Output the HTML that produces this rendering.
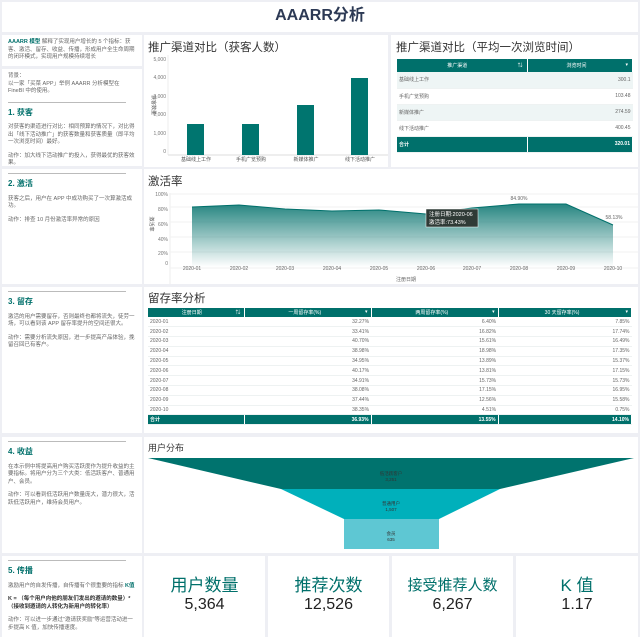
<!DOCTYPE html>
<html><head><meta charset="utf-8"><style>
*{margin:0;padding:0;box-sizing:border-box}
body{width:640px;height:637px;background:#eeeff4;position:relative;overflow:hidden;font-family:"Liberation Sans","Noto Sans CJK SC",sans-serif;color:#555}
.c{position:absolute;background:#fff}
.t{position:absolute;font-size:11.5px;color:#333}
.lt{font-size:5.5px;line-height:7.5px;color:#666;padding:0 6px}
.lt p{margin-bottom:6px}
.h{color:#00706b;font-weight:bold;font-size:8px;margin:6px 0 8px}
.hr{border-top:1px solid #bbb;margin:0 10px 0 6px}
.a{position:absolute;font-size:5px;color:#777}
table{border-collapse:collapse;width:100%;font-size:5px;color:#666}
th{background:#00706b;color:#fff;font-weight:normal;border-right:1px solid #fff}
td{border-bottom:1px solid #eef2f2;text-align:right;padding:0 2px}
td:first-child{text-align:left}
.tot td{background:#00706b;color:#fff;font-weight:bold;border-right:1px solid #fff}
.k{position:absolute;top:556px;height:81px;width:121px;background:#fff;text-align:center}
.k .l{color:#00706b;font-size:17px;margin-top:20px;line-height:20px}
.k .n{color:#222;font-size:16px;line-height:18px}
</style></head><body>
<div class="c" style="left:2px;top:2px;width:636px;height:30px;text-align:center;font-size:16px;font-weight:bold;color:#2d3a55;line-height:28px">AAARR分析</div>

<div class="c lt" style="left:2px;top:35px;width:140px;height:31px;padding-top:4px"><b style="color:#00706b">AAARR 模型</b> 解释了实现用户增长的 5 个指标：获客、激活、留存、收益、传播，形成用户全生命周期的闭环模式，实现用户规模持续增长</div>
<div class="c lt" style="left:2px;top:69px;width:140px;height:97px;padding-top:4px"><p>背景：<br>以一家「买菜 APP」举例 AAARR 分析模型在 FineBI 中的使用。</p><div class="hr" style="margin-left:0"></div><div class="h">1. 获客</div><p>对获客的渠道进行对比：相同预算的情况下，对比得出「线下活动推广」的获客数量和获客质量（即平均一次浏览时间）最好。</p><p>动作：加大线下活动推广的投入，获得最优的获客效果。</p></div>
<div class="c lt" style="left:2px;top:169px;width:140px;height:115px;padding-top:4px"><div class="hr" style="margin-left:0"></div><div class="h">2. 激活</div><p>获客之后，用户在 APP 中成功购买了一次算激活成功。</p><p>动作：排查 10 月份激活率异常的原因</p></div>
<div class="c lt" style="left:2px;top:287px;width:140px;height:146px;padding-top:4px"><div class="hr" style="margin-left:0"></div><div class="h">3. 留存</div><p>激活的用户需要留存，否则最终也都将流失，徒劳一场，可以看到该 APP 留存率提升的空间还很大。</p><p>动作：需要分析流失原因，进一步提高产品体验，挽留召回已有客户。</p></div>
<div class="c lt" style="left:2px;top:437px;width:140px;height:116px;padding-top:4px"><div class="hr" style="margin-left:0"></div><div class="h">4. 收益</div><p>在本示例中将提高用户购买活跃度作为提升收益的主要指标。将用户分为三个大类：低活跃客户、普通用户、会员。</p><p>动作：可以看到低活跃用户数量庞大，潜力很大，活跃低活跃用户，维持会员用户。</p></div>
<div class="c lt" style="left:2px;top:556px;width:140px;height:81px;padding-top:4px"><div class="hr" style="margin-left:0"></div><div class="h">5. 传播</div><p>激励用户的自发传播，自传播有个很重要的指标 <b style="color:#00706b">K值</b></p><p style="color:#333;font-weight:bold">K = （每个用户向他的朋友们发出的邀请的数量）*（接收到邀请的人转化为新用户的转化率）</p><p>动作：可以进一步通过"邀请获奖励"等运营活动进一步提高 K 值，加快传播速度。</p></div>

<!-- bar chart -->
<div class="c" style="left:144px;top:35px;width:244px;height:132px"></div>
<div class="t" style="left:148px;top:39px">推广渠道对比（获客人数）</div>
<svg class="c" style="left:144px;top:55px;background:none" width="244" height="112">
<line x1="24" y1="0" x2="24" y2="100" stroke="#eee"/><line x1="24" y1="100" x2="244" y2="100" stroke="#ddd"/>
<g font-size="5" fill="#777" text-anchor="end"><text x="22" y="6">5,000</text><text x="22" y="24">4,000</text><text x="22" y="43">3,000</text><text x="22" y="61">2,000</text><text x="22" y="80">1,000</text><text x="22" y="98">0</text></g>
<text x="8" y="50" font-size="5" fill="#555" transform="rotate(90 8 50)" text-anchor="middle">获客数量</text>
<g fill="#00756f"><rect x="43" y="69" width="17" height="31"/><rect x="98" y="69" width="17" height="31"/><rect x="153" y="50" width="17" height="50"/><rect x="207" y="23" width="17" height="77"/></g>
<g font-size="5" fill="#555" text-anchor="middle"><text x="52" y="106">基础线上工作</text><text x="107" y="106">手机广览预购</text><text x="162" y="106">新媒体推广</text><text x="216" y="106">线下活动推广</text></g>
</svg>

<!-- avg time table -->
<div class="c" style="left:391px;top:35px;width:247px;height:132px;padding:24px 5px 0 6px">
<div class="t" style="left:5px;top:4px">推广渠道对比（平均一次浏览时间）</div>
<table style="font-size:5px"><tr style="height:13px"><th>推广渠道 <span style="float:right;padding-right:4px">⇅</span></th><th>浏览时间 <span style="float:right;padding-right:4px">▾</span></th></tr>
<tr style="height:16px;background:#eef5f5"><td>基础线上工作</td><td>300.1</td></tr>
<tr style="height:16px"><td>手机广览预购</td><td>103.48</td></tr>
<tr style="height:16px;background:#eef5f5"><td>新媒体推广</td><td>274.59</td></tr>
<tr style="height:16px"><td>线下活动推广</td><td>400.45</td></tr>
<tr class="tot" style="height:16px"><td>合计</td><td>320.01</td></tr></table></div>

<!-- activation -->
<div class="c" style="left:144px;top:169px;width:494px;height:115px"></div>
<div class="t" style="left:148px;top:173px">激活率</div>
<svg style="position:absolute;left:144px;top:169px" width="494" height="115">
<defs><linearGradient id="g" x1="0" y1="0" x2="0" y2="1"><stop offset="0" stop-color="#00706b" stop-opacity=".85"/><stop offset="1" stop-color="#00706b" stop-opacity="0"/></linearGradient></defs>
<line x1="26" y1="24" x2="26" y2="115" stroke="#eee"/>
<g stroke="#f2f2f2"><line x1="26" y1="25" x2="494" y2="25"/><line x1="26" y1="38" x2="494" y2="38"/><line x1="26" y1="53" x2="494" y2="53"/><line x1="26" y1="68" x2="494" y2="68"/><line x1="26" y1="83" x2="494" y2="83"/><line x1="26" y1="99" x2="494" y2="99"/></g>
<g font-size="5" fill="#777" text-anchor="end"><text x="24" y="27">100%</text><text x="24" y="42">80%</text><text x="24" y="57">60%</text><text x="24" y="72">40%</text><text x="24" y="86">20%</text><text x="24" y="96">0</text></g>
<text x="6" y="55" font-size="5" fill="#555" transform="rotate(90 6 55)" text-anchor="middle">激活率</text>
<path d="M48,38 L95,36 L141,40 L188,42 L235,41 L282,45 L328,39 L375,35 L422,35 L469,56 L469,98 L48,98Z" fill="url(#g)"/>
<polyline points="48,38 95,36 141,40 188,42 235,41 282,45 328,39 375,35 422,35 469,56" fill="none" stroke="#00706b" stroke-width="1"/>
<g font-size="5" fill="#666" text-anchor="middle"><text x="375" y="31">84.90%</text><text x="470" y="50">58.13%</text>
<text x="48" y="101">2020-01</text><text x="95" y="101">2020-02</text><text x="141" y="101">2020-03</text><text x="188" y="101">2020-04</text><text x="235" y="101">2020-05</text><text x="282" y="101">2020-06</text><text x="328" y="101">2020-07</text><text x="375" y="101">2020-08</text><text x="422" y="101">2020-09</text><text x="469" y="101">2020-10</text><text x="262" y="112">注册日期</text></g>
<rect x="282" y="40" width="52" height="18" fill="#2f3a36" stroke="#fff" stroke-width=".5"/>
<text x="285" y="47" font-size="5.5" fill="#fff">注册日期:2020-06</text><text x="285" y="55" font-size="5.5" fill="#fff">激活率:73.43%</text>
</svg>

<!-- retention -->
<div class="c" style="left:144px;top:287px;width:494px;height:146px;padding:21px 6px 0 4px">
<div class="t" style="left:4px;top:3px">留存率分析</div>
<table><tr style="height:9px"><th style="width:96px">注册日期 <span style="float:right;padding-right:3px">⇅</span></th><th>一周留存率(%) <span style="float:right;padding-right:3px">▾</span></th><th>两周留存率(%) <span style="float:right;padding-right:3px">▾</span></th><th>30 天留存率(%) <span style="float:right;padding-right:3px">▾</span></th></tr>
<tr style="height:9.8px"><td>2020-01</td><td>32.27%</td><td>6.40%</td><td>7.85%</td></tr>
<tr style="height:9.8px"><td>2020-02</td><td>33.41%</td><td>16.82%</td><td>17.74%</td></tr>
<tr style="height:9.8px"><td>2020-03</td><td>40.70%</td><td>15.61%</td><td>16.49%</td></tr>
<tr style="height:9.8px"><td>2020-04</td><td>38.98%</td><td>18.98%</td><td>17.35%</td></tr>
<tr style="height:9.8px"><td>2020-05</td><td>34.95%</td><td>13.89%</td><td>15.37%</td></tr>
<tr style="height:9.8px"><td>2020-06</td><td>40.17%</td><td>13.81%</td><td>17.15%</td></tr>
<tr style="height:9.8px"><td>2020-07</td><td>34.91%</td><td>15.73%</td><td>15.73%</td></tr>
<tr style="height:9.8px"><td>2020-08</td><td>38.08%</td><td>17.15%</td><td>16.95%</td></tr>
<tr style="height:9.8px"><td>2020-09</td><td>37.44%</td><td>12.56%</td><td>15.58%</td></tr>
<tr style="height:9.8px"><td>2020-10</td><td>38.35%</td><td>4.51%</td><td>0.75%</td></tr>
<tr class="tot" style="height:10px"><td>合计</td><td>36.93%</td><td>13.55%</td><td>14.10%</td></tr></table></div>

<!-- funnel -->
<div class="c" style="left:144px;top:437px;width:494px;height:116px"></div>
<div class="t" style="left:148px;top:441px;font-size:9px">用户分布</div>
<svg style="position:absolute;left:144px;top:437px" width="494" height="116">
<polygon points="4,21 490,21 356,52 137,52" fill="#00736e"/>
<polygon points="137,52 356,52 295,82 200,82" fill="#00b0bb"/>
<rect x="200" y="82" width="95" height="30" fill="#5ec7d3"/>
<g font-size="4.5" fill="#333" text-anchor="middle"><text x="247" y="38">低活跃客户</text><text x="247" y="44">3,251</text><text x="247" y="68">普通用户</text><text x="247" y="74">1,507</text><text x="247" y="98">会员</text><text x="247" y="104">635</text></g>
</svg>

<div class="k" style="left:144px"><div class="l">用户数量</div><div class="n">5,364</div></div>
<div class="k" style="left:268px"><div class="l">推荐次数</div><div class="n">12,526</div></div>
<div class="k" style="left:392px"><div class="l" style="font-size:15px">接受推荐人数</div><div class="n">6,267</div></div>
<div class="k" style="left:516px;width:122px"><div class="l">K 值</div><div class="n">1.17</div></div>
</body></html>
